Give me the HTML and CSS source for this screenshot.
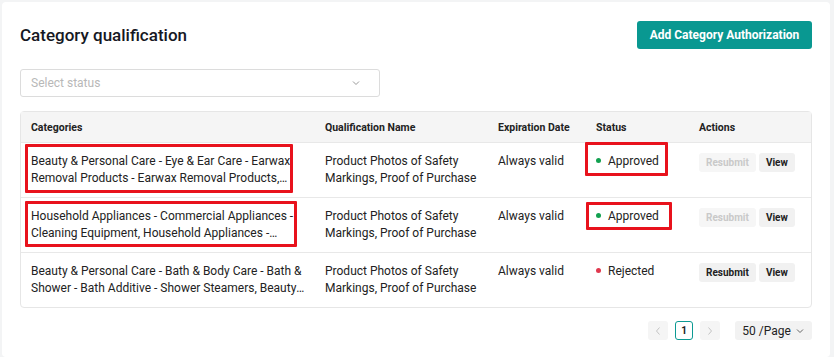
FILE: index.html
```html
<!DOCTYPE html>
<html lang="en">
<head>
    <meta charset="UTF-8">
    <meta name="viewport" content="width=device-width, initial-scale=1.0">
    <title>Category qualification</title>
    <link rel="stylesheet" href="styles.css">
</head>
<body>
    <div class="card">
        <div class="header">
            <h1>Category qualification</h1>
            <button class="primary">Add Category Authorization</button>
        </div>

        <div class="select">
            <span class="placeholder">Select status</span>
            <svg class="chevron" width="10" height="10" viewBox="0 0 10 10"><path d="M2 3.5 L5 6.5 L8 3.5" fill="none" stroke="#999" stroke-width="1"/></svg>
        </div>

        <table>
            <thead>
                <tr>
                    <th class="col-cat">Categories</th>
                    <th class="col-qual">Qualification Name</th>
                    <th class="col-exp">Expiration Date</th>
                    <th class="col-status">Status</th>
                    <th class="col-actions">Actions</th>
                </tr>
            </thead>
            <tbody>
                <tr>
                    <td><div class="clamp">Beauty &amp; Personal Care - Eye &amp; Ear Care - Earwax Removal Products - Earwax Removal Products, Earwax Removal Tools</div></td>
                    <td>Product Photos of Safety Markings, Proof of Purchase</td>
                    <td>Always valid</td>
                    <td><span class="dot green"></span>Approved</td>
                    <td><div class="actions"><button class="small disabled">Resubmit</button><button class="small">View</button></div></td>
                </tr>
                <tr>
                    <td><div class="clamp">Household Appliances - Commercial Appliances - Cleaning Equipment, Household Appliances - Commercial Appliances - Cleaning Equipment</div></td>
                    <td>Product Photos of Safety Markings, Proof of Purchase</td>
                    <td>Always valid</td>
                    <td><span class="dot green"></span>Approved</td>
                    <td><div class="actions"><button class="small disabled">Resubmit</button><button class="small">View</button></div></td>
                </tr>
                <tr>
                    <td><div class="clamp">Beauty &amp; Personal Care - Bath &amp; Body Care - Bath &amp; Shower - Bath Additive - Shower Steamers, Beauty &amp; Personal Care</div></td>
                    <td>Product Photos of Safety Markings, Proof of Purchase</td>
                    <td>Always valid</td>
                    <td><span class="dot red"></span>Rejected</td>
                    <td><div class="actions"><button class="small">Resubmit</button><button class="small">View</button></div></td>
                </tr>
            </tbody>
        </table>

        <div class="pager">
            <button class="page-nav"><svg width="8" height="10" viewBox="0 0 8 10"><path d="M5.5 1.5 L2.5 5 L5.5 8.5" fill="none" stroke="#c4c4c4" stroke-width="1"/></svg></button>
            <button class="page-num">1</button>
            <button class="page-nav"><svg width="8" height="10" viewBox="0 0 8 10"><path d="M2.5 1.5 L5.5 5 L2.5 8.5" fill="none" stroke="#c4c4c4" stroke-width="1"/></svg></button>
            <button class="page-size">50 /Page <svg width="10" height="10" viewBox="0 0 10 10"><path d="M2 3.5 L5 6.5 L8 3.5" fill="none" stroke="#666" stroke-width="1"/></svg></button>
        </div>

        <!-- annotation boxes drawn over the screenshot -->
        <div class="mark mark-cat1"></div>
        <div class="mark mark-cat2"></div>
        <div class="mark mark-st1"></div>
        <div class="mark mark-st2"></div>
    </div>
</body>
</html>
```

FILE: styles.css
```css
body {
    margin: 0;
    background-color: #f3f4f5;
    font-family: Roboto, "Liberation Sans", sans-serif;
    color: #1f1f1f;
}
.card {
    position: relative;
    margin: 2px 0 0 2px;
    width: 828px;
    height: 355px;
    box-sizing: border-box;
    background: #fff;
    border-radius: 4px;
    padding: 18px 18px 0 18px;
}
.header {
    display: flex;
    justify-content: space-between;
    align-items: center;
}
h1 {
    margin: 0;
    font-size: 17px;
    font-weight: 500;
    color: #161823;
}
button {
    font-family: inherit;
    border: none;
    cursor: pointer;
}
.primary {
    margin-top: 1px;
    height: 28px;
    width: 175px;
    background-color: #099891;
    color: #fff;
    font-size: 12px;
    font-weight: 700;
    border-radius: 3px;
}
.select {
    margin-top: 20px;
    width: 360px;
    height: 28px;
    box-sizing: border-box;
    border: 1px solid #dcdcdc;
    border-radius: 3px;
    display: flex;
    align-items: center;
    justify-content: space-between;
    padding: 0 18px 0 10px;
}
.placeholder {
    font-size: 12px;
    color: #b8b8b8;
}
table {
    margin-top: 14px;
    width: 792px;
    border-collapse: separate;
    border-spacing: 0;
    border: 1px solid #e6e6e6;
    border-radius: 4px;
    table-layout: fixed;
}
th, td {
    text-align: left;
    vertical-align: top;
    padding: 10px 10px;
    font-size: 12px;
    line-height: 17px;
    color: #222;
}
th {
    background-color: #f5f5f5;
    font-size: 10.5px;
    font-weight: 700;
    padding: 7px 10px 6px;
}
td {
    border-top: 1px solid #e8e8e8;
    height: 34px;
}
.col-cat { width: 274px; }
.col-qual { width: 153px; }
.col-exp { width: 78px; }
.col-status { width: 83px; }
.clamp {
    display: -webkit-box;
    -webkit-line-clamp: 2;
    -webkit-box-orient: vertical;
    overflow: hidden;
}
.dot {
    display: inline-block;
    width: 5px;
    height: 5px;
    border-radius: 50%;
    margin: 0 7px 2px 0;
    vertical-align: middle;
}
.green { background-color: #12a150; }
.red { background-color: #e0384e; }
.actions {
    display: flex;
    gap: 3px;
}
.small {
    height: 19px;
    padding: 0 7px;
    background-color: #f1f1f1;
    color: #222;
    font-size: 10px;
    font-weight: 700;
    border-radius: 3px;
}
.small.disabled {
    background-color: #f6f6f6;
    color: #c9c9c9;
}
.pager {
    margin-top: 13px;
    display: flex;
    justify-content: flex-end;
    align-items: center;
    gap: 7px;
}
.page-nav {
    width: 20px;
    height: 19px;
    background-color: #f5f5f5;
    border-radius: 3px;
    display: flex;
    align-items: center;
    justify-content: center;
    padding: 0;
}
.page-num {
    width: 18px;
    height: 19px;
    box-sizing: border-box;
    background: #fff;
    border: 1px solid #0c9a93;
    border-radius: 3px;
    font-size: 10px;
    font-weight: 700;
    padding: 0;
    color: #222;
}
.page-size {
    margin-left: 8px;
    width: 77px;
    height: 19px;
    background-color: #f2f2f2;
    border-radius: 3px;
    font-size: 12px;
    color: #222;
    display: flex;
    align-items: center;
    justify-content: center;
    gap: 4px;
}
.mark {
    position: absolute;
    border: 3px solid #e8121c;
    border-radius: 1px;
    box-sizing: border-box;
}
.mark-cat1 { left: 23px; top: 142px; width: 268px; height: 49px; }
.mark-cat2 { left: 23px; top: 199px; width: 272px; height: 46px; }
.mark-st1 { left: 583px; top: 140px; width: 83px; height: 34px; }
.mark-st2 { left: 584px; top: 200px; width: 86px; height: 28px; }
```
